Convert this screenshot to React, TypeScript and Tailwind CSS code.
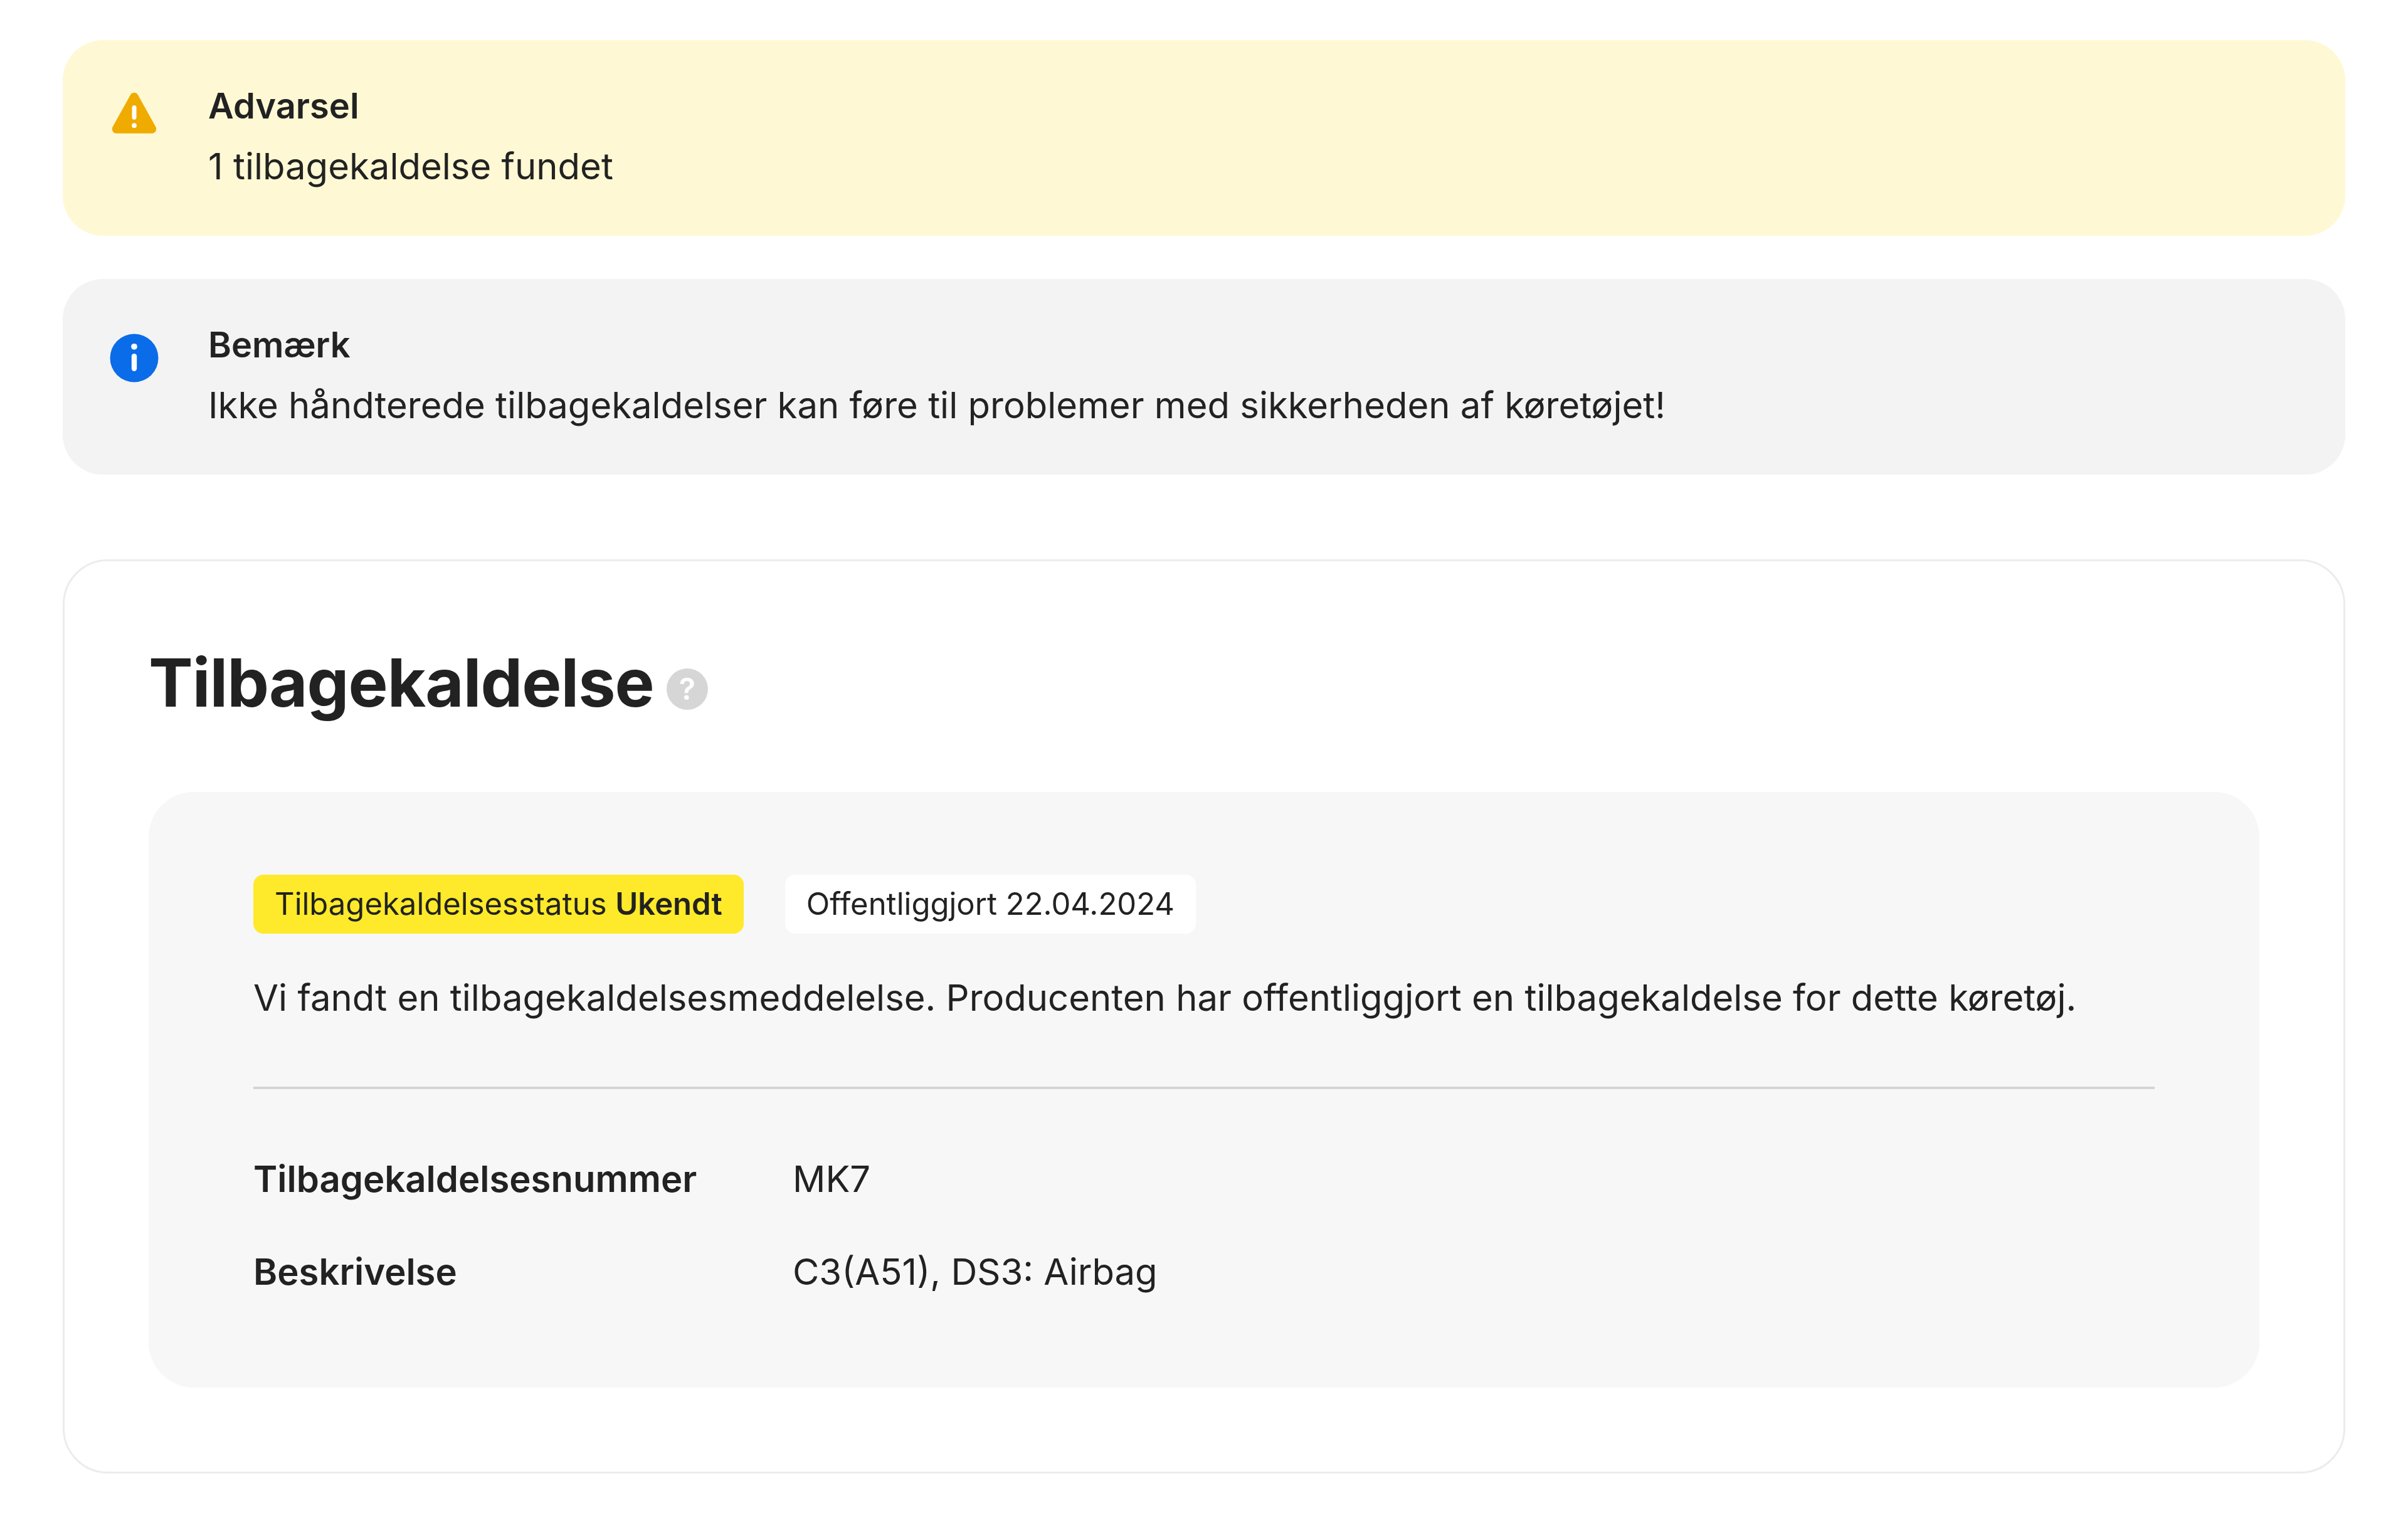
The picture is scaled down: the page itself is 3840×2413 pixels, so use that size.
export default function App() {
  return (
    <div className="w-[3840px] min-h-[2413px] bg-white px-[100px] pt-[64px] text-[#222]" style={{ fontFamily: "Inter, 'Noto Sans', sans-serif" }}>
      <div className="flex gap-[76px] rounded-[64px] bg-[#fef9d4] pl-[172px] pr-[80px] h-[312px] items-start pt-[70px]" style={{ paddingLeft: 72 }}>
        <svg width="84" height="84" viewBox="0 0 24 24" className="mt-[6px] shrink-0">
          <path d="M10.3 3.2c.75-1.3 2.65-1.3 3.4 0l8.1 14.6c.75 1.3-.2 3-1.7 3H3.9c-1.5 0-2.45-1.7-1.7-3z" fill="#f0ab00" />
          <rect x="11" y="8" width="2" height="6.5" rx="1" fill="#fff" />
          <circle cx="12" cy="17.2" r="1.1" fill="#fff" />
        </svg>
        <div>
          <div className="text-[56px] font-semibold leading-[70px]">Advarsel</div>
          <div className="text-[58px] leading-[74px] mt-[24px]">1 tilbagekaldelse fundet</div>
        </div>
      </div>
      <div className="mt-[69px] flex gap-[76px] rounded-[64px] bg-[#f3f3f3] h-[312px] items-start pt-[70px]" style={{ paddingLeft: 72 }}>
        <svg width="84" height="84" viewBox="0 0 24 24" className="mt-[14px] shrink-0">
          <circle cx="12" cy="12" r="11" fill="#0a6ce8" />
          <rect x="10.8" y="10" width="2.4" height="8" rx="1.2" fill="#fff" />
          <circle cx="12" cy="6.8" r="1.4" fill="#fff" />
        </svg>
        <div>
          <div className="text-[56px] font-semibold leading-[70px]">Bemærk</div>
          <div className="text-[58px] leading-[74px] mt-[24px]">Ikke håndterede tilbagekaldelser kan føre til problemer med sikkerheden af køretøjet!</div>
        </div>
      </div>
      <div className="mt-[135px] rounded-[72px] border-[3px] border-[#ececec] px-[134px] pt-[124px] pb-[134px]">
        <div className="flex items-center gap-[20px]">
          <h1 className="text-[106px] font-bold leading-[140px] tracking-[-1px]">Tilbagekaldelse</h1>
          <div className="mt-[20px] flex h-[66px] w-[66px] items-center justify-center rounded-full bg-[#d6d6d6] text-[48px] font-semibold text-white">?</div>
        </div>
        <div className="mt-[104px] rounded-[72px] bg-[#f7f7f7] px-[167px] pt-[132px] pb-[146px]">
          <div className="flex gap-[66px]">
            <div className="flex h-[94px] items-center rounded-[16px] bg-[#feea2a] px-[34px] text-[49px]">Tilbagekaldelsesstatus&nbsp;<span className="font-semibold">Ukendt</span></div>
            <div className="flex h-[94px] items-center rounded-[16px] bg-white px-[34px] text-[49px]">Offentliggjort 22.04.2024</div>
          </div>
          <p className="mt-[62px] text-[58px] leading-[80px]">Vi fandt en tilbagekaldelsesmeddelelse. Producenten har offentliggjort en tilbagekaldelse for dette køretøj.</p>
          <div className="mt-[102px] h-[4px] bg-[#d4d4d4]" />
          <div className="mt-[104px] grid grid-cols-[860px_1fr] gap-y-[70px] text-[58px] leading-[78px]">
            <div className="font-semibold">Tilbagekaldelsesnummer</div>
            <div>MK7</div>
            <div className="font-semibold">Beskrivelse</div>
            <div>C3(A51), DS3: Airbag</div>
          </div>
        </div>
      </div>
    </div>
  );
}
